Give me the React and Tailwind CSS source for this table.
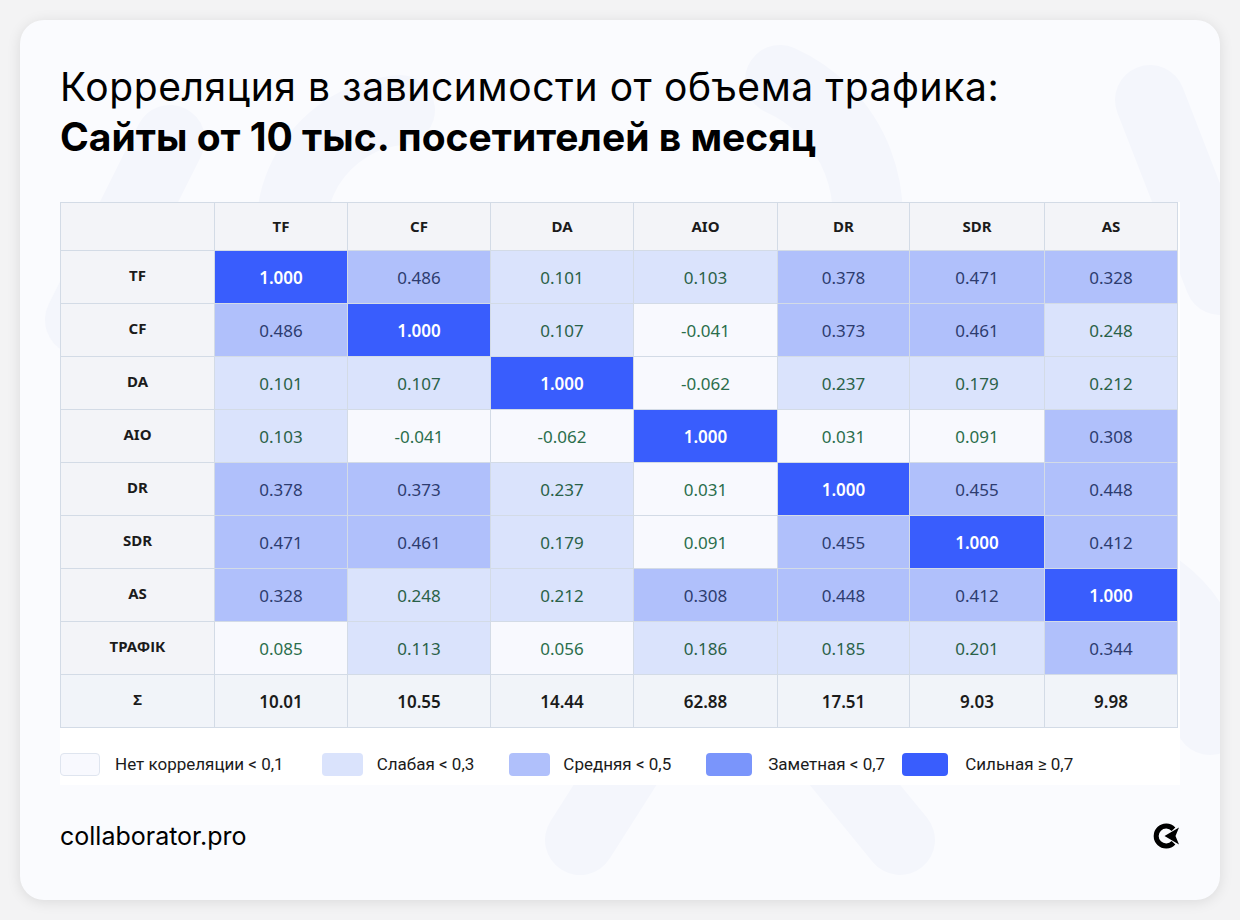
import React from "react";

const cols = ["TF", "CF", "DA", "AIO", "DR", "SDR", "AS"];
const widths = [154, 133, 143, 143, 144, 132, 135, 133];

const rows = [
  { label: "TF", values: [1, 0.486, 0.101, 0.103, 0.378, 0.471, 0.328] },
  { label: "CF", values: [0.486, 1, 0.107, -0.041, 0.373, 0.461, 0.248] },
  { label: "DA", values: [0.101, 0.107, 1, -0.062, 0.237, 0.179, 0.212] },
  { label: "AIO", values: [0.103, -0.041, -0.062, 1, 0.031, 0.091, 0.308] },
  { label: "DR", values: [0.378, 0.373, 0.237, 0.031, 1, 0.455, 0.448] },
  { label: "SDR", values: [0.471, 0.461, 0.179, 0.091, 0.455, 1, 0.412] },
  { label: "AS", values: [0.328, 0.248, 0.212, 0.308, 0.448, 0.412, 1] },
  { label: "ТРАФІК", values: [0.085, 0.113, 0.056, 0.186, 0.185, 0.201, 0.344] },
];

const sums = ["10.01", "10.55", "14.44", "62.88", "17.51", "9.03", "9.98"];

const legend = [
  {
    label: "Нет корреляции < 0,1",
    swatch: "w-[40px] mr-[15px] bg-[#f8f9fe] border border-[#dfe5ef]",
    gap: "mr-[38px]",
  },
  { label: "Слабая < 0,3", swatch: "w-[41px] mr-[14px] bg-[#dae3fc]", gap: "mr-[35px]" },
  { label: "Средняя < 0,5", swatch: "w-[41px] mr-[13px] bg-[#b0c0fb]", gap: "mr-[35px]" },
  { label: "Заметная < 0,7", swatch: "w-[46px] mr-[16px] bg-[#7a95fb]", gap: "mr-[17px]" },
  { label: "Сильная ≥ 0,7", swatch: "w-[46px] mr-[17px] bg-[#395dfd]", gap: "" },
];

// pick cell look from the correlation strength
const cellClass = (v) => {
  const a = Math.abs(v);
  if (a >= 0.7) return "bg-[#395dfd] text-white font-semibold";
  if (a >= 0.3) return "bg-[#b0c0fb] text-[#2d3c6f]";
  if (a >= 0.1) return "bg-[#dae3fc] text-[#2a6148]";
  return "bg-[#f8f9fe] text-[#2b6e4c]";
};

const fmt = (v) => v.toFixed(3);

const Logo = () => (
  <svg width="28" height="26" viewBox="0 0 28 26">
    <path
      d="M21.5 6.2 A10 10 0 1 0 21.5 19.8"
      fill="none"
      stroke="#000"
      strokeWidth="5"
      strokeLinecap="butt"
    />
    <path d="M12.5 13 L27 4.5 L23.5 13 L27 21.5 Z" fill="#000" />
  </svg>
);

const Pattern = () => (
  <svg
    className="absolute inset-0 h-full w-full"
    viewBox="0 0 1200 880"
    preserveAspectRatio="none"
    fill="none"
  >
    <g stroke="#f4f6fc" strokeWidth="70" strokeLinecap="round">
      <path d="M150 120 L60 300" />
      <path d="M380 90 A120 120 0 1 0 470 300" />
      <path d="M760 60 A140 140 0 1 1 640 330" />
      <path d="M1130 80 L1200 260" />
      <path d="M100 620 A150 150 0 0 1 380 700" />
      <path d="M560 820 L700 600 L880 820" />
      <path d="M1000 560 A130 130 0 0 1 1190 700" />
    </g>
  </svg>
);

export default function App() {
  return (
    <div className="min-h-[920px] w-[1240px] bg-[#f3f3f4] p-5">
      <div className="relative h-[880px] w-[1200px] overflow-hidden rounded-[24px] bg-[#fafbfe] shadow-[0_2px_14px_rgba(0,0,0,0.10)]">
        <Pattern />
        <div className="relative flex h-full flex-col px-[40px] pt-[42px]">
          <h1
            className="text-[39px] leading-[50px] text-black"
            style={{ fontFamily: "Inter, 'Noto Sans', sans-serif" }}
          >
            <span className="block font-normal tracking-[0.6px]">
              Корреляция в зависимости от объема трафика:
            </span>
            <span className="block font-bold">Сайты от 10 тыс. посетителей в месяц</span>
          </h1>

          <div className="mt-[40px] w-[1120px] bg-white pb-[7px]">
            <table
              className="border-collapse"
              style={{ fontFamily: "'Noto Sans', 'Open Sans', sans-serif" }}
            >
              <colgroup>
                {widths.map((w, i) => (
                  <col key={i} style={{ width: w }} />
                ))}
              </colgroup>
              <thead>
                <tr className="h-[48px] bg-[#f3f4f8]">
                  <th className="border border-[#d3dbe6]"></th>
                  {cols.map((c) => (
                    <th
                      key={c}
                      className="border border-[#d3dbe6] text-[15px] font-bold text-[#1b1b1b]"
                    >
                      {c}
                    </th>
                  ))}
                </tr>
              </thead>
              <tbody>
                {rows.map((r) => (
                  <tr key={r.label} className="h-[53px]">
                    <td className="border border-[#d3dbe6] bg-[#f3f4f8] pb-[4px] text-center text-[15px] font-bold text-[#1b1b1b]">
                      {r.label}
                    </td>
                    {r.values.map((v, i) => (
                      <td
                        key={i}
                        className={`border border-[#d3dbe6] pt-[2px] text-center text-[17px] ${cellClass(v)}`}
                      >
                        {fmt(v)}
                      </td>
                    ))}
                  </tr>
                ))}
                <tr className="h-[53px] bg-[#f1f4f9]">
                  <td className="border border-[#d3dbe6] pb-[4px] text-center text-[15px] font-bold text-[#1b1b1b]">
                    Σ
                  </td>
                  {sums.map((s, i) => (
                    <td
                      key={i}
                      className="border border-[#d3dbe6] pt-[2px] text-center text-[17px] font-semibold text-[#1b1b1b]"
                    >
                      {s}
                    </td>
                  ))}
                </tr>
              </tbody>
            </table>

            <div
              className="mt-[24px] flex items-center text-[17px] text-[#1b1b1b]"
              style={{ fontFamily: "Roboto, 'Noto Sans', sans-serif" }}
            >
              {legend.map((l) => (
                <div key={l.label} className={`flex items-center ${l.gap}`}>
                  <span className={`h-[23px] rounded-[4px] ${l.swatch}`}></span>
                  <span>{l.label}</span>
                </div>
              ))}
            </div>
          </div>

          <div className="mt-[33px] flex w-[1120px] items-center justify-between">
            <span
              className="text-[25px] text-black"
              style={{ fontFamily: "Inter, 'Noto Sans', sans-serif" }}
            >
              collaborator.pro
            </span>
            <Logo />
          </div>
        </div>
      </div>
    </div>
  );
}
